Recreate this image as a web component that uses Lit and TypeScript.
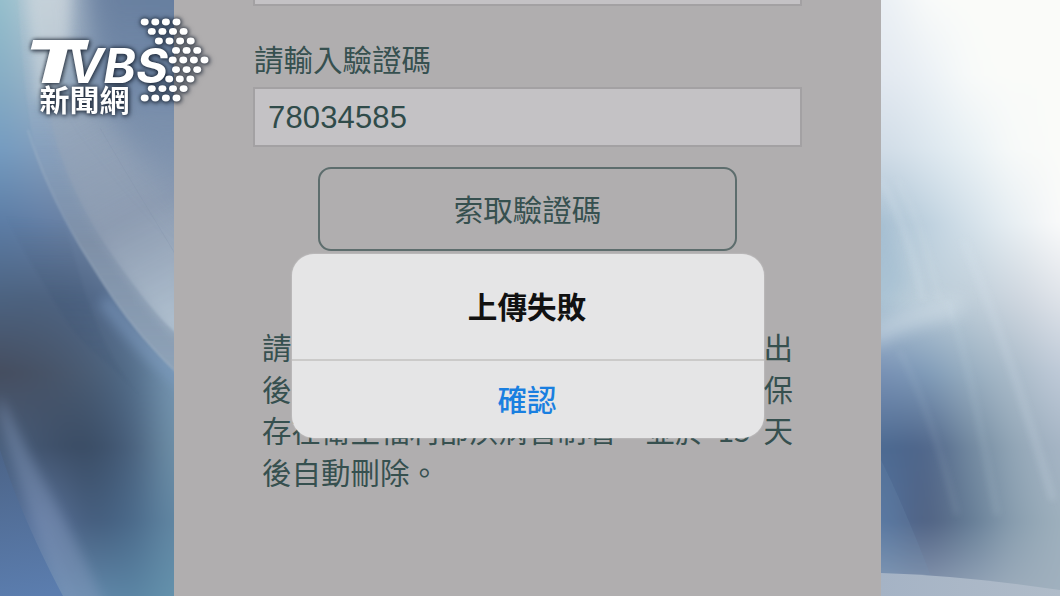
import { LitElement, html, css, svg } from "lit";
import { customElement } from "lit/decorators.js";

// Rows of the dotted arrow: [y, first x, count]
const DOT_ROWS: [number, number, number][] = [
  [22, 144.7, 4],
  [31.4, 151.8, 4],
  [41, 158.9, 4],
  [50.4, 176, 3],
  [60, 172.7, 4],
  [69.6, 176, 3],
  [79, 169.2, 3],
  [88.6, 151.8, 4],
  [98, 144.7, 4],
];

// Columns of soft vertical gradients that melt sideways into one another.
const washes = (columns: string[][], step: number) => svg`
  <defs>
    ${columns.map(
      (stops, c) => svg`<linearGradient id=${"wash" + c} x1="0" y1="0" x2="0" y2="596" gradientUnits="userSpaceOnUse">
        ${stops.map((color, i) => svg`<stop offset=${i / (stops.length - 1)} stop-color=${color} />`)}
      </linearGradient>`
    )}
    <filter id="melt" filterUnits="userSpaceOnUse" x="-120" y="-10" width="420" height="620" color-interpolation-filters="sRGB">
      <feGaussianBlur stdDeviation="19 3" />
    </filter>
  </defs>
  <g filter="url(#melt)">
    ${columns.map((_, c) => {
      const left = c === 0 ? -100 : (c - 0.5) * step;
      const right = c === columns.length - 1 ? 280 : (c + 0.5) * step;
      return svg`<rect x=${left} y="-20" width=${right - left} height="640" fill=${`url(#wash${c})`} />`;
    })}
  </g>`;

const LEFT_WASH = [
  ["#8fbcca", "#84adc4", "#739bc0", "#5a7ba4", "#4b6280", "#444c5e", "#4a607e", "#4f6b95", "#5a80ae"],
  ["#bccbd6", "#a0b6c8", "#829dbc", "#647fa6", "#4c617e", "#465266", "#40526c", "#6078a0", "#7090b8"],
  ["#a3b2c4", "#8597b0", "#8593ab", "#6c82a2", "#4e6484", "#495b73", "#384a62", "#435b7b", "#6288aa"],
  ["#6e86a8", "#6d83a4", "#8a98ad", "#8496b0", "#5f789a", "#4f6986", "#465d7a", "#486788", "#5882a2"],
  ["#5d7ba2", "#6a82a4", "#7489a8", "#8fa3bd", "#a3b8cc", "#7898b4", "#7092aa", "#6288a4", "#6492ac"],
];

const RIGHT_WASH = [
  ["#e8eef4", "#e2e8f0", "#cfdbe6", "#a9c0d2", "#b2c8d6", "#7790b4", "#4c6a92", "#5474a0", "#8ca0b8"],
  ["#f8faf9", "#eaf0f5", "#dbe6ee", "#bdd0de", "#bccdd9", "#7f9bb8", "#4d6388", "#4e5f80", "#8a99b2"],
  ["#fafbf9", "#f8faf9", "#e8f0f4", "#d3e0e9", "#bfced9", "#98aec0", "#71889f", "#647c95", "#94a4b8"],
  ["#fafbf9", "#fafbf9", "#f8faf9", "#e8eff3", "#ccd5de", "#aabbc9", "#93a7b7", "#8a9fb0", "#9dadbc"],
  ["#fafbf9", "#fafbf9", "#fafbf9", "#fafafa", "#e0e4ea", "#bfcad8", "#a6b5c5", "#9eb0bd", "#a0b0be"],
];

@customElement("station-logo")
class StationLogo extends LitElement {
  static styles = css`
    :host { display: block; width: 230px; height: 130px; }
    .art { display: block; filter: drop-shadow(0 0 2px rgba(20, 30, 45, 0.9)) drop-shadow(1px 1px 2px rgba(20, 30, 45, 0.6)); }
    .latin { font: italic 700 48px "Inter", "Liberation Sans", sans-serif; fill: #fff; }
    .tall { font-size: 59px; font-weight: 900; }
    .han { font: 700 30px "Noto Sans CJK TC", sans-serif; fill: #fff; }
  `;
  render() {
    return html`<svg class="art" width="230" height="130" viewBox="0 0 230 130">
      <g fill="#fff">
        ${DOT_ROWS.map(([y, x, n]) =>
          Array.from({ length: n }, (_, i) => svg`<ellipse cx=${x + i * 10.6} cy=${y} rx="4" ry="3.4" />`)
        )}
      </g>
      <text class="latin tall" x="24" y="82.5" textLength="61" lengthAdjust="spacingAndGlyphs">T</text>
      <text class="latin" x="67" y="82.5" textLength="101" lengthAdjust="spacingAndGlyphs">VBS</text>
      <text class="han" x="39.5" y="110.5" textLength="90">新聞網</text>
    </svg>`;
  }
}

@customElement("backdrop-left")
class BackdropLeft extends LitElement {
  static styles = css`
    :host { display: block; width: 174px; height: 596px; }
    .art { display: block; }
  `;
  render() {
    return html`<svg class="art" width="174" height="596" viewBox="0 0 174 596">
      ${washes(LEFT_WASH, 43.5)}
      <defs>
        <linearGradient id="outer" x1="0" y1="0" x2="0" y2="372" gradientUnits="userSpaceOnUse">
          <stop offset=".05" stop-color="#b4c6d2" stop-opacity=".3" />
          <stop offset=".4" stop-color="#8ba3bf" stop-opacity=".6" />
          <stop offset=".65" stop-color="#8091a8" stop-opacity=".95" />
          <stop offset="1" stop-color="#8fa3b8" />
        </linearGradient>
        <linearGradient id="inner" x1="60" y1="120" x2="170" y2="330" gradientUnits="userSpaceOnUse">
          <stop offset="0" stop-color="#99a8ba" stop-opacity=".6" />
          <stop offset=".5" stop-color="#909eb3" stop-opacity=".9" />
          <stop offset="1" stop-color="#b6c6d4" />
        </linearGradient>
        <linearGradient id="top" x1="0" y1="0" x2="0" y2="1">
          <stop offset="0" stop-color="#62799a" stop-opacity=".9" />
          <stop offset=".6" stop-color="#6f86a6" stop-opacity=".6" />
          <stop offset="1" stop-color="#8296b3" stop-opacity="0" />
        </linearGradient>
        <linearGradient id="fold" x1="0" y1="215" x2="0" y2="396" gradientUnits="userSpaceOnUse">
          <stop offset="0" stop-color="#3c5473" stop-opacity="0" />
          <stop offset=".5" stop-color="#3c5473" stop-opacity=".2" />
          <stop offset="1" stop-color="#3c5473" stop-opacity=".1" />
        </linearGradient>
        <linearGradient id="low" x1="0" y1="450" x2="30" y2="596" gradientUnits="userSpaceOnUse">
          <stop offset="0" stop-color="#4c6488" />
          <stop offset="1" stop-color="#5b7dae" />
        </linearGradient>
        <filter id="b1" x="-20%" y="-20%" width="140%" height="140%" color-interpolation-filters="sRGB"><feGaussianBlur stdDeviation="0.8" /></filter>
        <filter id="b6" x="-50%" y="-50%" width="200%" height="200%" color-interpolation-filters="sRGB"><feGaussianBlur stdDeviation="6" /></filter>
        <filter id="b14" x="-100%" y="-100%" width="300%" height="300%" color-interpolation-filters="sRGB"><feGaussianBlur stdDeviation="14" /></filter>
      </defs>
      <path d="M104 300C130 334 155 360 186 386" fill="none" stroke="#7e9cc2" stroke-width="14" opacity=".5" filter="url(#b6)" />
      <path d="M64 222C80 275 97 350 140 396C120 370 85 350 66 320C48 290 25 255 5 215Z" fill="url(#fold)" filter="url(#b1)" />
      <path d="M18 -5C22 60 27 110 36 155C50 190 64 216 80 246C90 262 101 280 113 298C133 327 153 350 180 376V-5Z" fill="url(#outer)" filter="url(#b1)" />
      <path d="M46 100C54 150 74 192 95 228C110 253 127 276 144 298C156 313 166 324 180 337V100Z" fill="url(#inner)" opacity=".7" filter="url(#b6)" />
      <path d="M50 115C57 155 75 193 95 228C110 253 127 276 144 298C156 313 166 324 180 337V115Z" fill="url(#inner)" opacity=".6" filter="url(#b1)" />
      <path d="M80 -30H210V250C190 220 130 150 95 100Z" fill="url(#top)" filter="url(#b14)" />
      <path d="M26 -10H70L68 55L54 100L36 100Z" fill="#d2dadf" opacity=".55" filter="url(#b6)" />
      <path d="M100 128C130 180 155 220 180 262" fill="none" stroke="#7e8ea6" stroke-width="1" opacity=".25" />
      <path d="M28 130C40 170 60 212 80 246C90 262 101 280 113 298C133 327 153 350 180 376" fill="none" stroke="#aebdcc" stroke-width="2" opacity=".35" filter="url(#b1)" />
      <path d="M0 415C15 480 40 540 68 615H108C82 545 45 490 0 395Z" fill="#8499bc" opacity=".42" filter="url(#b6)" />
      <path d="M0 450C14 496 40 553 63 596H0Z" fill="url(#low)" />
    </svg>`;
  }
}

@customElement("backdrop-right")
class BackdropRight extends LitElement {
  static styles = css`
    :host { display: block; width: 179px; height: 596px; }
    .art { display: block; }
  `;
  render() {
    return html`<svg class="art" width="179" height="596" viewBox="0 0 179 596">
      ${washes(RIGHT_WASH, 44.75)}
      <defs>
        <linearGradient id="floor" x1="0" y1="0" x2="1" y2="0">
          <stop offset="0" stop-color="#a5b3c5" />
          <stop offset="1" stop-color="#b0bcc9" />
        </linearGradient>
        <filter id="b2" x="-50%" y="-50%" width="200%" height="200%" color-interpolation-filters="sRGB"><feGaussianBlur stdDeviation="3" /></filter>
        <filter id="b8" x="-100%" y="-100%" width="300%" height="300%" color-interpolation-filters="sRGB"><feGaussianBlur stdDeviation="8" /></filter>
      </defs>
      <path d="M-20 190C0 210 14 240 26 285L0 310H-20Z" fill="#94b4cc" opacity=".3" filter="url(#b8)" />
      <path d="M-10 326C20 312 45 302 80 297V315C45 322 15 332 -10 348Z" fill="#d6e2ea" opacity=".5" filter="url(#b8)" />
      <g fill="none" stroke="#dce8f1" filter="url(#b2)">
        <path d="M0 180C20 215 34 262 42 300" stroke-width="5" opacity=".25" />
        <path d="M16 180C36 215 50 262 58 300" stroke-width="4" opacity=".18" />
        <path d="M18 350C42 395 60 450 76 515" stroke-width="5" opacity=".09" />
        <path d="M66 300C86 355 98 420 116 515" stroke-width="6" opacity=".1" />
        <path d="M82 240C112 310 140 390 172 500" stroke-width="8" opacity=".17" />
      </g>
      <path d="M0 460C18 496 36 540 50 576H0Z" fill="#7695b9" opacity=".18" />
      <path d="M0 573C60 575 120 581 179 590V596H0Z" fill="url(#floor)" />
    </svg>`;
  }
}

@customElement("alert-dialog")
class AlertDialog extends LitElement {
  static styles = css`
    :host {
      display: flex; flex-direction: column; box-sizing: border-box;
      width: 472px; height: 184px; border-radius: 22px; overflow: hidden;
      background: #e5e5e6; font-family: "Noto Sans CJK TC", sans-serif;
      box-shadow: 0 0 2px rgba(235, 235, 235, 0.6);
    }
    .title, .confirm { display: flex; align-items: center; justify-content: center; font-size: 29.6px; line-height: 40px; }
    .title { box-sizing: border-box; height: 107px; padding: 0 2px 1px 0; font-weight: 700; color: #111; border-bottom: 2px solid #cbcac9; }
    .confirm { flex: 1; padding: 0 2px 2px 0; border: 0; background: none; font-family: inherit; font-weight: 500; color: #1a7fe0; }
  `;
  render() {
    return html`<div class="title">上傳失敗</div><button class="confirm">確認</button>`;
  }
}

@customElement("app-root")
class AppRoot extends LitElement {
  static styles = css`
    :host { display: block; }
    .stage { position: relative; display: flex; width: 1060px; height: 596px; overflow: hidden; }
    .screen {
      position: relative; box-sizing: border-box; flex: 1; height: 596px; padding: 0 79px;
      display: flex; flex-direction: column; background: #b0aeaf; color: #36504f;
      font: 400 29.5px/42px "Noto Sans CJK TC", sans-serif;
    }
    .field { box-sizing: border-box; width: 549px; border: 2px solid #a3a1a3; background: #c4c2c5; }
    .previous { height: 6px; border-top: 0; }
    .label { margin: 31px 0 0 1px; height: 50px; line-height: 42px; }
    .code {
      height: 60px; padding: 2px 13px 0; display: flex; align-items: center;
      font-family: "Liberation Sans", sans-serif; font-size: 31px; letter-spacing: 0.15px; color: #304b4a;
    }
    .request {
      box-sizing: border-box; width: 419px; height: 84px; margin: 20px 0 0 65px; padding: 0 0 2px;
      border: 2px solid #5d6d6d; border-radius: 13px; background: none; font: inherit; color: inherit;
    }
    .notice { margin: 75px 0 0 9px; width: 531px; }
    .line { display: flex; justify-content: space-between; height: 41.6px; line-height: 41.6px; white-space: pre; }
    .dialog { position: absolute; left: 118px; top: 254px; }
    .logo { position: absolute; left: 0; top: 0; }
  `;
  render() {
    return html`<div class="stage">
      <backdrop-left></backdrop-left>
      <main class="screen">
        <div class="field previous"></div>
        <p class="label">請輸入驗證碼</p>
        <div class="field code">78034585</div>
        <button class="request">索取驗證碼</button>
        <div class="notice">
          <div class="line"><span>請</span><span>出</span></div>
          <div class="line"><span>後</span><span>保</span></div>
          <div class="line"><span>存在衛生福利部疾病管制署，並於</span><span>15</span><span>天</span></div>
          <div class="line"><span>後自動刪除。</span></div>
        </div>
        <alert-dialog class="dialog"></alert-dialog>
      </main>
      <backdrop-right></backdrop-right>
      <station-logo class="logo"></station-logo>
    </div>`;
  }
}
